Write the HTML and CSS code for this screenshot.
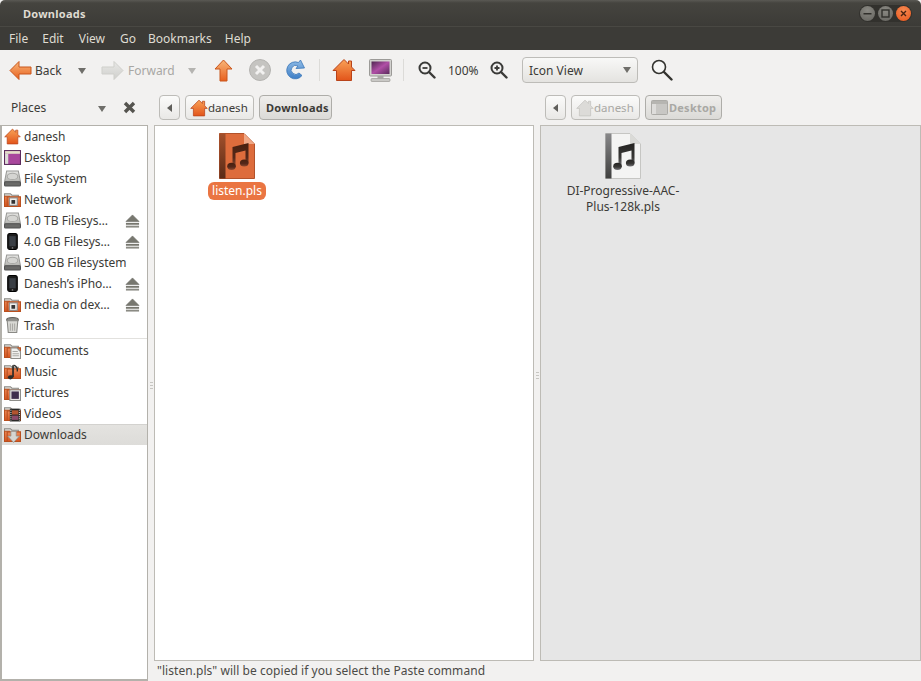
FILE: index.html
```html
<!DOCTYPE html>
<html lang="en">
<head>
<meta charset="utf-8">
<title>Downloads</title>
<link rel="stylesheet" href="styles.css">
</head>
<body>
<svg class="defs" width="0" height="0" aria-hidden="true">
  <defs>
    <linearGradient id="gHouse" x1="0" y1="0" x2="0" y2="1"><stop offset="0" stop-color="#f9a257"/><stop offset="1" stop-color="#e2541a"/></linearGradient>
    <linearGradient id="gArrow" x1="0" y1="0" x2="0" y2="1"><stop offset="0" stop-color="#f8b679"/><stop offset="1" stop-color="#e8601e"/></linearGradient>
    <linearGradient id="gGray" x1="0" y1="0" x2="0" y2="1"><stop offset="0" stop-color="#e8e8e6"/><stop offset="1" stop-color="#cfcfcc"/></linearGradient>
    <linearGradient id="gFolder" x1="0" y1="0" x2="0" y2="1"><stop offset="0" stop-color="#ee8a58"/><stop offset="1" stop-color="#d8541e"/></linearGradient>
    <linearGradient id="gDrive" x1="0" y1="0" x2="0" y2="1"><stop offset="0" stop-color="#e6e6e4"/><stop offset="1" stop-color="#b4b4b0"/></linearGradient>
    <linearGradient id="gScreen" x1="0" y1="0" x2="1" y2="1"><stop offset="0" stop-color="#4f2650"/><stop offset=".5" stop-color="#b04fa6"/><stop offset="1" stop-color="#5a2a5c"/></linearGradient>
    <linearGradient id="gBlue" x1="0" y1="0" x2="0" y2="1"><stop offset="0" stop-color="#8fbbe6"/><stop offset="1" stop-color="#3f7fc6"/></linearGradient>
    <linearGradient id="gNote" x1="0" y1="0" x2="0" y2="1"><stop offset="0" stop-color="#242321"/><stop offset=".6" stop-color="#3a3937"/><stop offset="1" stop-color="#77767a"/></linearGradient>
    <linearGradient id="gNoteSel" x1="0" y1="0" x2="0" y2="1"><stop offset="0" stop-color="#47200f"/><stop offset=".6" stop-color="#55281a"/><stop offset="1" stop-color="#8f4a30"/></linearGradient>
    <linearGradient id="gSpineSel" x1="0" y1="0" x2="0" y2="1"><stop offset="0" stop-color="#a2502c"/><stop offset="1" stop-color="#5a2a16"/></linearGradient>
    <linearGradient id="gSpine" x1="0" y1="0" x2="0" y2="1"><stop offset="0" stop-color="#88888a"/><stop offset="1" stop-color="#3f3f3e"/></linearGradient>
    <symbol id="house" viewBox="0 0 24 24"><path d="M12 1.500 16.500 6V3H19.500V9L23 12.500H19.500V22.500H4.500V12.500H1Z" fill="url(#gHouse)" stroke="#b8431a" stroke-width="1" stroke-linejoin="round"/></symbol>
    <symbol id="houseOff" viewBox="0 0 24 24"><path d="M12 1.500 16.500 6V3H19.500V9L23 12.500H19.500V22.500H4.500V12.500H1Z" fill="#dcdbd8" stroke="#c4c3bf" stroke-width="1" stroke-linejoin="round"/></symbol>
    <symbol id="folder" viewBox="0 0 16 16"><path d="M.5 2.500H6L7.500 4H13.500V14.500H.5Z" fill="#d8d7d3" stroke="#8c8a85"/><path d="M.5 5H5V14.500H.5Z" fill="url(#gFolder)" stroke="#b8501f"/><path d="M3 5.500H15.500V14.500H3Z" fill="url(#gFolder)" stroke="#b8501f"/></symbol>
    <symbol id="drive" viewBox="0 0 16 16"><path d="M2.500 1H13.500L15.500 11H.5Z" fill="url(#gDrive)" stroke="#9a9a97"/><ellipse cx="8" cy="6" rx="5" ry="3" fill="#d5d5d2" stroke="#a9a9a6"/><rect x=".5" y="11" width="15" height="4" rx="1" fill="#6a6a68" stroke="#505050"/></symbol>
    <symbol id="phone" viewBox="0 0 16 16"><rect x="3.500" y=".5" width="9" height="15" rx="2" fill="#1c1c1c" stroke="#000"/><rect x="5" y="3" width="6" height="9.500" fill="#3a3f45"/><circle cx="8" cy="14" r=".8" fill="#777"/></symbol>
    <symbol id="eject" viewBox="0 0 16 14"><path d="M8 .5 15 7.500H1Z" fill="#77776f" stroke="#66665f" stroke-width=".6"/><rect x="1" y="9" width="14" height="2" fill="#77776f"/><rect x="1" y="12" width="14" height="2" fill="#8b8b84"/></symbol>
    <symbol id="note" viewBox="0 0 22 28"><path d="M5.500 5 21.500 1V21.500H18.500V8.500L8.500 11V25H5.500Z" fill="url(#gNote)"/><ellipse cx="4.500" cy="24.300" rx="4.300" ry="3.600" fill="url(#gNote)"/><ellipse cx="17.200" cy="21" rx="4.300" ry="3.600" fill="url(#gNote)"/></symbol>
    <symbol id="noteSel" viewBox="0 0 22 28"><path d="M5.500 5 21.500 1V21.500H18.500V8.500L8.500 11V25H5.500Z" fill="url(#gNoteSel)"/><ellipse cx="4.500" cy="24.300" rx="4.300" ry="3.600" fill="url(#gNoteSel)"/><ellipse cx="17.200" cy="21" rx="4.300" ry="3.600" fill="url(#gNoteSel)"/></symbol>
  </defs>
</svg>

<div class="window">
  <header class="titlebar">
    <span class="title">Downloads</span>
    <div class="wm">
      <span class="wm-btn"><svg width="15" height="15" viewBox="0 0 15 15"><rect x="3.500" y="7" width="8" height="1.500" fill="#302f2b"/></svg></span>
      <span class="wm-btn"><svg width="15" height="15" viewBox="0 0 15 15"><rect x="4" y="4" width="7" height="7" fill="none" stroke="#302f2b" stroke-width="1.400"/></svg></span>
      <span class="wm-btn wm-close"><svg width="15" height="15" viewBox="0 0 15 15"><path d="M5 5 10 10M10 5 5 10" stroke="#4a2412" stroke-width="1.400"/></svg></span>
    </div>
  </header>

  <nav class="menubar">
    <span class="menu m-file">File</span>
    <span class="menu m-edit">Edit</span>
    <span class="menu m-view">View</span>
    <span class="menu m-go">Go</span>
    <span class="menu m-book">Bookmarks</span>
    <span class="menu m-help">Help</span>
  </nav>

  <div class="toolbar">
    <svg class="t-back" width="23" height="21" viewBox="0 0 23 21"><path d="M10 1.500 1 10.500 10 19.500V14H22V7H10Z" fill="url(#gArrow)" stroke="#c9561c" stroke-linejoin="round"/></svg>
    <span class="t-label t-backlabel">Back</span>
    <span class="tri t-tri1"></span>
    <svg class="t-fwd" width="23" height="21" viewBox="0 0 23 21"><path d="M13 1.500 22 10.500 13 19.500V14H1V7H13Z" fill="url(#gGray)" stroke="#cfcfcb" stroke-linejoin="round"/></svg>
    <span class="t-label off t-fwdlabel">Forward</span>
    <span class="tri off t-tri2"></span>
    <svg class="t-up" width="19" height="23" viewBox="0 0 19 23"><path d="M9.500 1 18 10H13V22H6V10H1Z" fill="url(#gArrow)" stroke="#c9561c" stroke-linejoin="round"/></svg>
    <svg class="t-stop" width="22" height="22" viewBox="0 0 22 22"><circle cx="11" cy="11" r="10.500" fill="#c5c4c1" stroke="#b4b3b0"/><path d="M7 7 15 15M15 7 7 15" stroke="#f2f1f0" stroke-width="3"/></svg>
    <svg class="t-reload" width="22" height="22" viewBox="0 0 22 22"><path d="M18 16.500A8.500 8.500 0 1 1 14.500 3.500L16.500 1 20.500 9 12 9.500 14 7A4.500 4.500 0 1 0 15 14Z" fill="url(#gBlue)" stroke="#3a76b8" stroke-width=".8" stroke-linejoin="round"/></svg>
    <span class="t-sep t-sep1"></span>
    <svg class="t-home" width="24" height="24"><use href="#house"/></svg>
    <svg class="t-comp" width="23" height="23" viewBox="0 0 23 23"><rect x=".5" y=".5" width="22" height="16.500" rx="1" fill="#d2d1ce" stroke="#9b9a97"/><rect x="2.500" y="2.500" width="18" height="12.500" fill="url(#gScreen)"/><rect x="8.500" y="17" width="6" height="2.500" fill="#a8a7a4"/><rect x="2" y="19.500" width="19" height="3" rx="1" fill="#c9c8c5" stroke="#8e8d8a" stroke-width=".6"/></svg>
    <span class="t-sep t-sep2"></span>
    <svg class="t-zout" width="18" height="18" viewBox="0 0 18 18"><circle cx="7" cy="7" r="5.500" fill="none" stroke="#3a3a38" stroke-width="2"/><path d="M4.500 7H9.500" stroke="#3a3a38" stroke-width="1.800"/><path d="M11 11 16.500 16.500" stroke="#3a3a38" stroke-width="2.400" stroke-linecap="round"/></svg>
    <span class="t-zoom">100%</span>
    <svg class="t-zin" width="18" height="18" viewBox="0 0 18 18"><circle cx="7" cy="7" r="5.500" fill="none" stroke="#3a3a38" stroke-width="2"/><path d="M4.500 7H9.500M7 4.500V9.500" stroke="#3a3a38" stroke-width="1.800"/><path d="M11 11 16.500 16.500" stroke="#3a3a38" stroke-width="2.400" stroke-linecap="round"/></svg>
    <div class="combo"><span>Icon View</span><span class="tri"></span></div>
    <svg class="t-search" width="22" height="22" viewBox="0 0 22 22"><circle cx="8" cy="8" r="6.500" fill="#f7f7f6" stroke="#33332f" stroke-width="1.600"/><path d="M13 13 20.500 20.500" stroke="#33332f" stroke-width="2.400" stroke-linecap="round"/></svg>
  </div>

  <div class="main">
    <aside class="sidebar">
      <div class="side-head">
        <span class="side-title">Places</span>
        <span class="tri side-tri"></span>
        <svg class="side-x" width="13" height="13" viewBox="0 0 13 13"><path d="M2 2 11 11M11 2 2 11" stroke="#55544f" stroke-width="3.400"/></svg>
      </div>
      <div class="side-list">
        <div class="row"><svg class="ri" width="17" height="17"><use href="#house"/></svg><span class="rt">danesh</span></div>
        <div class="row"><svg class="ri" width="17" height="17" viewBox="0 0 16 16"><rect x=".5" y="1.500" width="15" height="13" fill="#a8479c" stroke="#5a2a5c"/><rect x="1" y="2" width="14" height="2.500" fill="#e4e0c8"/><rect x="1" y="4.500" width="3" height="9.500" fill="#dcdcd6"/></svg><span class="rt">Desktop</span></div>
        <div class="row"><svg class="ri" width="17" height="17"><use href="#drive"/></svg><span class="rt">File System</span></div>
        <div class="row"><svg class="ri" width="17" height="17" viewBox="0 0 16 16"><use href="#folder" width="16" height="16"/><rect x="5" y="6.500" width="7.500" height="7" fill="#efefec" stroke="#888"/><rect x="7" y="8.500" width="3.500" height="3.500" fill="#333"/></svg><span class="rt">Network</span></div>
        <div class="row"><svg class="ri" width="17" height="17"><use href="#drive"/></svg><span class="rt grow">1.0 TB Filesys…</span><svg class="ej" width="15" height="14"><use href="#eject"/></svg></div>
        <div class="row"><svg class="ri" width="17" height="17"><use href="#phone"/></svg><span class="rt grow">4.0 GB Filesys…</span><svg class="ej" width="15" height="14"><use href="#eject"/></svg></div>
        <div class="row"><svg class="ri" width="17" height="17"><use href="#drive"/></svg><span class="rt">500 GB Filesystem</span></div>
        <div class="row"><svg class="ri" width="17" height="17"><use href="#phone"/></svg><span class="rt grow">Danesh’s iPho…</span><svg class="ej" width="15" height="14"><use href="#eject"/></svg></div>
        <div class="row"><svg class="ri" width="17" height="17" viewBox="0 0 16 16"><use href="#folder" width="16" height="16"/><rect x="5" y="6.500" width="7.500" height="7" fill="#efefec" stroke="#888"/><rect x="7" y="8.500" width="3.500" height="3.500" fill="#333"/></svg><span class="rt grow">media on dex…</span><svg class="ej" width="15" height="14"><use href="#eject"/></svg></div>
        <div class="row"><svg class="ri" width="17" height="17" viewBox="0 0 16 16"><ellipse cx="8" cy="2.500" rx="5.500" ry="2" fill="#8e8e8a" stroke="#5f5f5c"/><path d="M3 3.500 4 14.500H12L13 3.500Z" fill="#d8d8d4" stroke="#8a8a86"/><path d="M6 6V13M8 6V13M10 6V13" stroke="#aaa9a5"/></svg><span class="rt">Trash</span></div>
        <div class="side-sep"></div>
        <div class="row"><svg class="ri" width="17" height="17" viewBox="0 0 16 16"><use href="#folder" width="16" height="16"/><path d="M6.500 5.500H12L15.500 9V15.500H6.500Z" fill="#f0f0ee" stroke="#8e8e8a"/><path d="M8 9H13M8 11H14M8 13H14" stroke="#a9a9a5"/></svg><span class="rt">Documents</span></div>
        <div class="row"><svg class="ri" width="17" height="17" viewBox="0 0 16 16"><use href="#folder" width="16" height="16"/><path d="M8.500 2V12.500H7.500V14" stroke="#2e2d2b" stroke-width="1.600" fill="none"/><ellipse cx="6" cy="13.500" rx="2.300" ry="2" fill="#2e2d2b"/><path d="M9 2C12 3 13 5 12.500 8" stroke="#2e2d2b" stroke-width="1.300" fill="none"/></svg><span class="rt">Music</span></div>
        <div class="row"><svg class="ri" width="17" height="17" viewBox="0 0 16 16"><use href="#folder" width="16" height="16"/><rect x="5.500" y="5.500" width="10" height="10" fill="#efefec" stroke="#8e8e8a"/><rect x="7" y="7" width="7" height="7" fill="#3d2f4e"/></svg><span class="rt">Pictures</span></div>
        <div class="row"><svg class="ri" width="17" height="17" viewBox="0 0 16 16"><use href="#folder" width="16" height="16"/><rect x="5.500" y="3.500" width="10" height="12" fill="#2a2a28"/><rect x="7.500" y="5" width="6" height="4" fill="#b2542f"/><rect x="7.500" y="10" width="6" height="4" fill="#8d4a6a"/><path d="M6.500 4.500V15M14.500 4.500V15" stroke="#d5d5d1" stroke-dasharray="1 1"/></svg><span class="rt">Videos</span></div>
        <div class="row row-sel"><svg class="ri" width="17" height="17" viewBox="0 0 16 16"><use href="#folder" width="16" height="16"/><path d="M6.500 5H11.500V9.500H14.500L9 15.500 3.500 9.500H6.500Z" fill="#d6d6d2" stroke="#8e8e8a" stroke-width=".7"/></svg><span class="rt">Downloads</span></div>
      </div>
    </aside>
    <div class="handle"><span></span></div>

    <div class="content">
      <div class="panes">
        <section class="pane pane-first">
          <div class="pathbar">
            <span class="pbtn pback"><span class="ltri"></span></span>
            <span class="pbtn p-home"><svg width="18" height="18"><use href="#house"/></svg>danesh</span>
            <span class="pbtn pcur p-dl">Downloads</span>
          </div>
          <div class="view">
            <div class="item">
              <svg class="file-icon" width="36" height="46" viewBox="0 0 36 46">
                <path d="M.5 .5H25L35.500 11V45.500H.5Z" fill="#dd6c3c" stroke="#b2522b"/>
                <rect x=".5" y=".5" width="6" height="45" fill="url(#gSpineSel)"/>
                <path d="M25 .5 35.500 11H25Z" fill="#f0a886"/>
                <use href="#noteSel" x="8" y="9" width="22" height="28"/>
              </svg>
              <span class="label label-sel">listen.pls</span>
            </div>
          </div>
        </section>
        <div class="handle"><span></span></div>
        <section class="pane pane-off">
          <div class="pathbar">
            <span class="pbtn pback"><span class="ltri"></span></span>
            <span class="pbtn p-home off-t"><svg width="18" height="18"><use href="#houseOff"/></svg>danesh</span>
            <span class="pbtn pcur p-desk off-t"><svg width="17" height="15" viewBox="0 0 17 15"><rect x=".5" y=".5" width="16" height="14" rx="1" fill="#c8c7c4" stroke="#acaba7"/><rect x="1" y="1" width="15" height="3" fill="#b6b5b1"/><rect x="1" y="4" width="4" height="10" fill="#dedddb"/></svg>Desktop</span>
          </div>
          <div class="view view-off">
            <div class="item">
              <svg class="file-icon" width="36" height="46" viewBox="0 0 36 46">
                <path d="M.5 .5H25L35.500 11V45.500H.5Z" fill="#f4f4f3" stroke="#c6c6c3"/>
                <rect x=".5" y=".5" width="6" height="45" fill="url(#gSpine)"/>
                <path d="M25 .5 35.500 11H25Z" fill="#dadad7"/>
                <use href="#note" x="8" y="9" width="22" height="28"/>
              </svg>
              <span class="label">DI-Progressive-AAC-Plus-128k.pls</span>
            </div>
          </div>
        </section>
      </div>
      <div class="status">"listen.pls" will be copied if you select the Paste command</div>
    </div>
  </div>
</div>
</body>
</html>
```

FILE: styles.css
```css
* { box-sizing: border-box; }
html, body { margin: 0; height: 100%; }
body { background: #f2f1f0; font-family: "Noto Sans", "Open Sans", sans-serif; font-size: 12px; color: #3c3b37; overflow: hidden; }
.defs { display: block; height: 0; }
svg { flex: none; display: block; }

.window { width: 921px; height: 681px; display: flex; flex-direction: column; background: #f2f1f0; border-radius: 5px 5px 0 0; overflow: hidden; }

.titlebar { height: 27px; flex: none; display: flex; align-items: center; padding: 0 9px 0 23px; background: linear-gradient(#5a5954 0, #45443f 3px, #3c3b37 100%); border-bottom: 1px solid #494843; }
.title { font-weight: 700; font-size: 11px; letter-spacing: .25px; color: #dfdbd2; }
.wm { margin-left: auto; display: flex; gap: 3px; padding: 1px 1px; border-radius: 10px; background: #32312d; }
.wm-btn { width: 15px; height: 15px; border-radius: 50%; background: radial-gradient(circle at 50% 30%, #8a8983, #64635e); }
.wm-close { background: radial-gradient(circle at 50% 30%, #f68a52, #e8561c); }

.menubar { height: 23px; flex: none; display: flex; align-items: center; background: #3c3b37; padding-bottom: 1px; }
.menu { color: #dfdbd2; font-size: 12px; }
.m-file { margin-left: 9px; }
.m-edit { margin-left: 14px; }
.m-view { margin-left: 15px; }
.m-go { margin-left: 15px; }
.m-book { margin-left: 12px; }
.m-help { margin-left: 13px; }

.toolbar { height: 40px; flex: none; display: flex; align-items: center; padding-left: 9px; }
.t-label { font-size: 12px; }
.off { color: #a8a7a4; }
.t-backlabel { margin-left: 3px; width: 27px; }
.tri { width: 0; height: 0; border-left: 4.500px solid transparent; border-right: 4.500px solid transparent; border-top: 6px solid #6f6e6a; }
.tri.off { border-top-color: #b5b4b1; }
.t-tri1 { margin: 2px 0 0 16px; }
.t-fwd { margin-left: 15px; }
.t-fwdlabel { margin-left: 4px; width: 44px; }
.t-tri2 { margin: 2px 0 0 16px; }
.t-up { margin-left: 18px; }
.t-stop { margin-left: 16px; }
.t-reload { margin-left: 13px; }
.t-sep { width: 1px; height: 22px; background: #dcdbd8; }
.t-sep1 { margin-left: 13px; }
.t-home { margin-left: 12px; }
.t-comp { margin-left: 13px; }
.t-sep2 { margin-left: 11px; }
.t-zout { margin-left: 14px; }
.t-zoom { margin-left: 12px; width: 30px; font-size: 12px; }
.t-zin { margin-left: 12px; }
.combo { margin-left: 14px; width: 116px; height: 26px; display: flex; align-items: center; justify-content: space-between; padding: 0 6px; border: 1px solid #bdbcb8; border-radius: 4px; background: linear-gradient(#f8f8f7, #e4e3e0); font-size: 12px; }
.t-search { margin-left: 13px; }

.main { flex: 1; display: flex; min-height: 0; }
.sidebar { width: 148px; flex: none; display: flex; flex-direction: column; }
.side-head { height: 35px; flex: none; display: flex; align-items: center; padding-left: 11px; }
.side-title { font-size: 12px; width: 87px; }
.side-tri { margin-top: 2px; }
.side-x { margin-left: 17px; }
.side-list { flex: 1; background: #fff; border: solid #b3b1ab; border-width: 1px 1px 2px 2px; }
.row { height: 21px; display: flex; align-items: center; padding: 0 7px 0 2px; }
.ri { margin-right: 3px; }
.rt { white-space: nowrap; }
.grow { flex: 1; }
.side-sep { height: 4px; margin-top: 2px; margin-bottom: -2px; border-top: 1px solid #e2e1de; }
.row-sel { background: linear-gradient(#e4e3e0, #dddcd9); box-shadow: inset 0 1px 0 #d3d2cf; }

.handle { width: 6px; flex: none; display: flex; align-items: center; justify-content: center; }
.handle span { width: 3px; height: 7px; background: repeating-linear-gradient(#c7c6c2 0 1px, transparent 1px 3px); }

.content { flex: 1; min-width: 0; display: flex; flex-direction: column; }
.panes { flex: 1; display: flex; min-height: 0; }
.pane { flex: 1; min-width: 0; display: flex; flex-direction: column; }
.pane-first { flex: 0 0 380px; }
.pathbar { height: 35px; flex: none; display: flex; align-items: center; gap: 5px; padding: 0 0 0 5px; }
.pbtn { height: 25px; display: flex; align-items: center; padding: 0 5px 0 4px; border: 1px solid #bdbcb8; border-radius: 4px; background: linear-gradient(#fbfbfa, #e9e8e6); font-size: 11.500px; }
.pback { width: 21px; justify-content: center; padding: 0; }
.ltri { width: 0; height: 0; border-top: 4px solid transparent; border-bottom: 4px solid transparent; border-right: 5px solid #605f5b; }
.pcur { background: linear-gradient(#efeeec, #dbdad7); border-color: #aeada9; font-weight: 700; font-size: 11px; letter-spacing: .25px; padding: 0 5px 0 6px; }
.p-home { width: 69px; }
.p-dl { width: 73px; }
.p-desk { width: 77px; padding: 0 5px; gap: 1px; }
.off-t { color: #a9a8a4; }
.view { flex: 1; background: #fff; border: 1px solid #bdbbb5; padding-top: 7px; }
.view-off { background: #e6e6e6; }
.item { width: 130px; margin-left: 17px; display: flex; flex-direction: column; align-items: center; gap: 3px; }
.file-icon { height: 46px; }
.label { max-width: 122px; text-align: center; line-height: 16px; font-size: 12px; padding: 1px 4px; border-radius: 6px; color: #3c3b37; }
.label-sel { background: #ea7542; color: #fff; }
.status { height: 20px; flex: none; padding: 2px 0 0 3px; font-size: 12px; letter-spacing: .05px; line-height: 16px; color: #4c4b47; }
```
